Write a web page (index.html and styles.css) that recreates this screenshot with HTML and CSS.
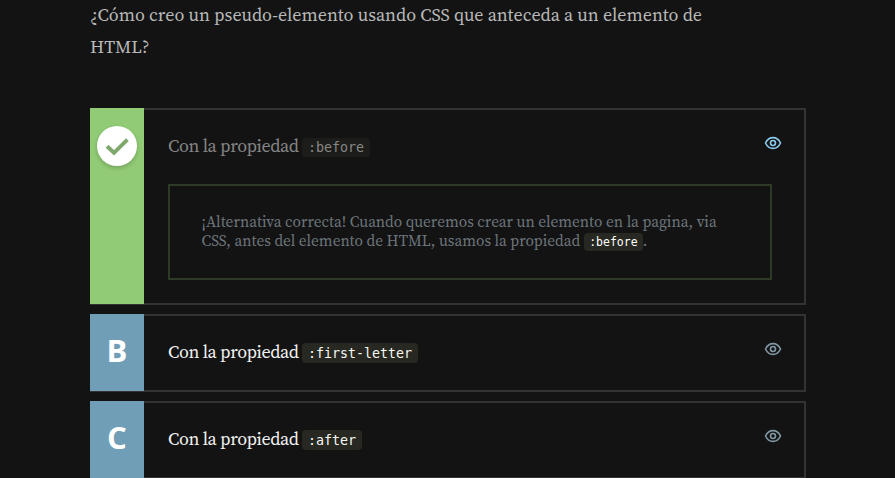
FILE: index.html
```html
<!DOCTYPE html>
<html lang="es">
<head>
<meta charset="utf-8">
<title>Pseudo-elementos</title>
<link rel="stylesheet" href="styles.css">
</head>
<body>
<main class="quiz">
  <p class="question">¿Cómo creo un pseudo-elemento usando CSS que anteceda a un elemento de<br>HTML?</p>
  <ul class="options">
    <li class="option correct">
      <div class="badge"><span class="check"><svg width="24" height="24" viewBox="0 0 24 24"><path d="M2 12.2 9 18.800 22.400 5.600" fill="none" stroke="#7fa96c" stroke-width="4"/></svg></span></div>
      <div class="body">
        <p class="answer"><span class="label">Con la propiedad</span><code>:before</code></p>
        <div class="feedback"><p>¡Alternativa correcta! Cuando queremos crear un elemento en la pagina, via<br>CSS, antes del elemento de HTML, usamos la propiedad <code>:before</code>.</p></div>
      </div>
      <svg class="eye" width="18" height="14" viewBox="0 0 18 14"><path d="M1.5 7C3.2 3.4 5.9 1.6 9 1.6S14.800 3.400 16.500 7C14.800 10.600 12.100 12.400 9 12.400S3.200 10.600 1.500 7Z"/><circle cx="9" cy="7" r="2.500"/></svg>
    </li>
    <li class="option">
      <div class="badge">B</div>
      <div class="body"><p class="answer"><span class="label">Con la propiedad</span><code>:first-letter</code></p></div>
      <svg class="eye" width="18" height="14" viewBox="0 0 18 14"><path d="M1.5 7C3.2 3.4 5.9 1.6 9 1.6S14.800 3.400 16.500 7C14.800 10.600 12.100 12.400 9 12.400S3.200 10.600 1.500 7Z"/><circle cx="9" cy="7" r="2.500"/></svg>
    </li>
    <li class="option">
      <div class="badge">C</div>
      <div class="body"><p class="answer"><span class="label">Con la propiedad</span><code>:after</code></p></div>
      <svg class="eye" width="18" height="14" viewBox="0 0 18 14"><path d="M1.5 7C3.2 3.4 5.9 1.6 9 1.6S14.800 3.400 16.500 7C14.800 10.600 12.100 12.400 9 12.400S3.200 10.600 1.500 7Z"/><circle cx="9" cy="7" r="2.500"/></svg>
    </li>
  </ul>
</main>
</body>
</html>
```

FILE: styles.css
```css
* { box-sizing: border-box; }
html, body { height: 478px; overflow: hidden; }
body {
  margin: 0;
  background: #131313;
  font-family: "Source Serif Pro", "Source Serif 4", "Liberation Serif", serif;
  font-optical-sizing: none;
}
p { margin: 0; }
.quiz { width: 716px; margin: -1px 0 0 90px; }
.question {
  height: 109px;
  font-size: 18px;
  line-height: 32px;
  color: #b9b9b9;
  white-space: nowrap;
}
.options {
  display: flex;
  flex-direction: column;
  gap: 9px;
  margin: 0;
  padding: 0;
  list-style: none;
}
.option {
  display: grid;
  grid-template-columns: 54px minmax(0, 1fr) 18px;
  height: 78px;
  flex-shrink: 0;
  padding-right: 22px;
  border: 2px solid #333;
}
.correct { height: 197px; }
.badge {
  display: flex;
  justify-content: center;
  margin: -2px 0 -1px -2px;
  width: 54px;
  background: #719eb7;
  color: #fff;
  font: 700 31px/73px "Open Sans", sans-serif;
}
.correct .badge { background: #91cb75; }
.check {
  display: flex;
  align-items: center;
  justify-content: center;
  width: 40px;
  height: 40px;
  margin-top: 18px;
  border-radius: 50%;
  background: #fff;
  box-shadow: 0 2px 4px rgba(0, 0, 0, 0.2);
}
.body { padding-left: 24px; margin-left: -2px; }
.answer {
  display: flex;
  align-items: center;
  gap: 4px;
  height: 20px;
  margin-top: 27px;
  font-size: 18px;
  line-height: 18px;
  color: #f1f1f1;
  white-space: nowrap;
}
.label { width: 130px; margin-top: -2px; letter-spacing: -0.4px; }
code {
  font-family: "DejaVu Sans Mono", monospace;
  background: #272822;
  color: #f8f8f2;
  border-radius: 4px;
}
.answer code {
  height: 20px;
  padding: 1px 6px 0;
  font-size: 13.3px;
  line-height: 20px;
}
.correct .answer { color: #858585; }
.correct .answer code { background: #1c1c1a; color: #888885; height: 19px; line-height: 18px; margin-top: 1px; }
.feedback {
  width: 604px;
  height: 96px;
  margin-top: 27px;
  padding: 26px 31.5px;
  border: 2px solid #2d3a26;
}
.feedback p {
  font-size: 15.3px;
  line-height: 19px;
  color: #6d757c;
  white-space: nowrap;
}
.feedback code {
  margin-left: 0.5px;
  padding: 2px 5px;
  font-size: 11.5px;
  line-height: 13px;
  color: #fff;
}
.eye {
  margin-top: 26px;
  fill: none;
  stroke: #8097a3;
  stroke-width: 1.6;
}
.correct .eye { stroke: #8bcaec; }
```
